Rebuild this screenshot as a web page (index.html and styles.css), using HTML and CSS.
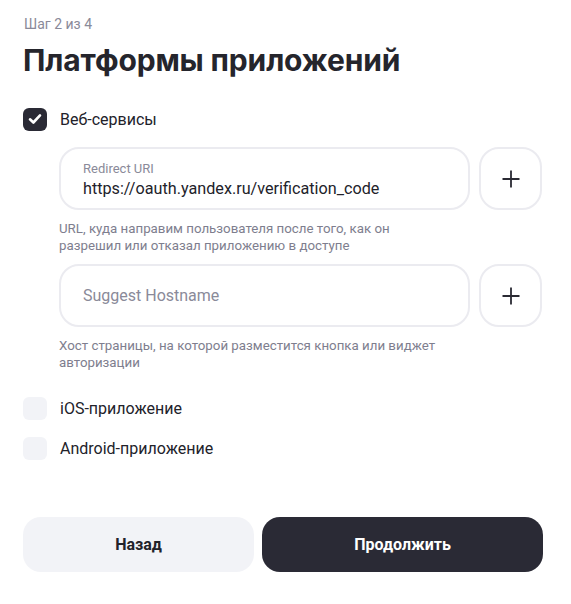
FILE: index.html
```html
<!DOCTYPE html>
<html lang="ru">
<head>
<meta charset="utf-8">
<title>Платформы приложений</title>
<link rel="stylesheet" href="styles.css">
</head>
<body>
<div class="page">
  <div class="step">Шаг 2 из 4</div>
  <h1 class="title">Платформы приложений</h1>

  <label class="check check-web">
    <span class="box box-on">
      <svg width="16" height="16" viewBox="0 0 16 16"><path d="M3 8.3 L6.4 11.5 L13 4.4" fill="none" stroke="#fff" stroke-width="2.6" stroke-linecap="round" stroke-linejoin="round"/></svg>
    </span>
    <span class="check-label">Веб-сервисы</span>
  </label>

  <div class="web">
    <div class="field-row">
      <div class="field">
        <div class="field-label">Redirect URI</div>
        <div class="field-value">https://oauth.yandex.ru/verification_code</div>
      </div>
      <button class="add" type="button" aria-label="Добавить">
        <svg width="20" height="20" viewBox="0 0 20 20"><path d="M10 1.5V18.5M1.5 10H18.5" stroke="#2a2a33" stroke-width="1.8"/></svg>
      </button>
    </div>
    <div class="hint">URL, куда направим пользователя после того, как он разрешил или отказал приложению в доступе</div>

    <div class="field-row">
      <div class="field field-empty">
        <div class="placeholder">Suggest Hostname</div>
      </div>
      <button class="add" type="button" aria-label="Добавить">
        <svg width="20" height="20" viewBox="0 0 20 20"><path d="M10 1.5V18.5M1.5 10H18.5" stroke="#2a2a33" stroke-width="1.8"/></svg>
      </button>
    </div>
    <div class="hint">Хост страницы, на которой разместится кнопка или виджет авторизации</div>
  </div>

  <label class="check check-ios">
    <span class="box"></span>
    <span class="check-label">iOS-приложение</span>
  </label>
  <label class="check check-android">
    <span class="box"></span>
    <span class="check-label">Android-приложение</span>
  </label>

  <div class="actions">
    <button class="btn btn-back" type="button">Назад</button>
    <button class="btn btn-next" type="button">Продолжить</button>
  </div>
</div>
</body>
</html>
```

FILE: styles.css
```css
* { box-sizing: border-box; }
html, body { margin: 0; padding: 0; background: #fff; }
body {
  font-family: "Roboto", "Noto Sans", sans-serif;
  color: #2a2a33;
}
.page {
  width: 520px;
  margin-left: 23px;
  padding-top: 15px;
}
.step {
  font-size: 14px;
  line-height: 18px;
  color: #8a8a99;
  font-weight: 400;
  padding-left: 1px;
}
.title {
  margin: 9px 0 0 0;
  font-family: "Inter", "Roboto", sans-serif;
  font-size: 30px;
  line-height: 36px;
  font-weight: 700;
  letter-spacing: -0.15px;
  color: #25252c;
}
.check {
  display: flex;
  align-items: center;
  gap: 13px;
  height: 24px;
}
.check-web { margin-top: 29px; }
.box {
  width: 24px;
  height: 23px;
  border-radius: 6px;
  background: #f2f3f7;
  display: flex;
  align-items: center;
  justify-content: center;
}
.box-on { background: #2a2a35; }
.check-label {
  font-size: 16px;
  color: #22222a;
}
.web {
  padding-left: 36px;
  margin-top: 16px;
}
.field-row {
  display: flex;
  gap: 9px;
}
.field {
  width: 411px;
  height: 63px;
  border: 2px solid #ebebf0;
  border-radius: 20px;
  padding: 11px 22px 0;
}
.field-label {
  font-size: 13px;
  line-height: 18px;
  color: #8a8a99;
}
.field-value {
  font-size: 16.2px;
  line-height: 22px;
  color: #22222a;
}
.field-empty {
  display: flex;
  align-items: center;
  padding-top: 0;
}
.placeholder {
  font-size: 16px;
  color: #8a8a99;
}
.add {
  width: 63px;
  height: 63px;
  border: 2px solid #ebebf0;
  border-radius: 20px;
  background: #fff;
  display: flex;
  align-items: center;
  justify-content: center;
  padding: 0;
}
.hint {
  font-size: 13.3px;
  line-height: 17px;
  color: #7e7e8e;
  margin-top: 10px;
  margin-bottom: 10px;
  width: 380px;
}
.check-ios { margin-top: 25px; }
.check-android { margin-top: 16px; }
.actions {
  display: flex;
  gap: 8px;
  margin-top: 57px;
}
.btn {
  height: 55px;
  border: none;
  border-radius: 18px;
  font-family: inherit;
  font-size: 16px;
  font-weight: 700;
}
.btn-back {
  width: 231px;
  background: #f2f3f7;
  color: #22222a;
}
.btn-next {
  width: 281px;
  background: #2a2a35;
  color: #fff;
}
```
